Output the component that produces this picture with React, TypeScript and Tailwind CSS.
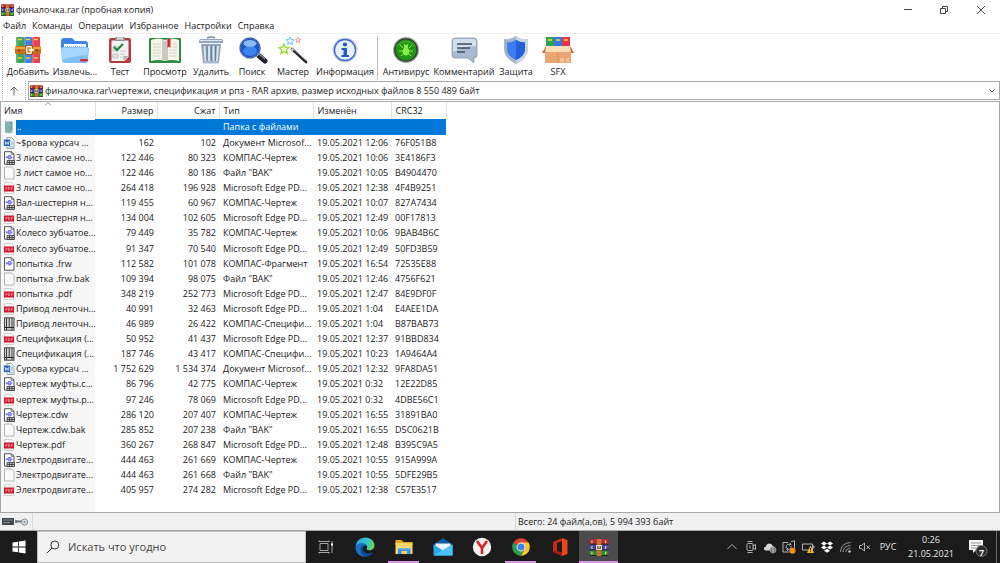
import type { ReactNode } from "react";
import { clsx } from "clsx";

type FileKind = "word" | "cdw" | "frw" | "spw" | "blank" | "pdf";

interface ArchiveFile {
  name: string;
  size: string;
  packed: string;
  kind: FileKind;
  modified: string;
  crc: string;
}

const typeNames: Record<FileKind, string> = {
  word: "Документ Microsof...",
  cdw: "КОМПАС-Чертеж",
  frw: "КОМПАС-Фрагмент",
  spw: "КОМПАС-Специфи...",
  blank: 'Файл "BAK"',
  pdf: "Microsoft Edge PD...",
};

const files: ArchiveFile[] = [
  { name: "~$рова курсач ...", size: "162", packed: "102", kind: "word", modified: "19.05.2021 12:06", crc: "76F051B8" },
  { name: "3 лист самое но...", size: "122 446", packed: "80 323", kind: "cdw", modified: "19.05.2021 10:06", crc: "3E4186F3" },
  { name: "3 лист самое но...", size: "122 446", packed: "80 186", kind: "blank", modified: "19.05.2021 10:05", crc: "B4904470" },
  { name: "3 лист самое но...", size: "264 418", packed: "196 928", kind: "pdf", modified: "19.05.2021 12:38", crc: "4F4B9251" },
  { name: "Вал-шестерня н...", size: "119 455", packed: "60 967", kind: "cdw", modified: "19.05.2021 10:07", crc: "827A7434" },
  { name: "Вал-шестерня н...", size: "134 004", packed: "102 605", kind: "pdf", modified: "19.05.2021 12:49", crc: "00F17813" },
  { name: "Колесо зубчатое...", size: "79 449", packed: "35 782", kind: "cdw", modified: "19.05.2021 10:06", crc: "9BAB4B6C" },
  { name: "Колесо зубчатое...", size: "91 347", packed: "70 540", kind: "pdf", modified: "19.05.2021 12:49", crc: "50FD3B59" },
  { name: "попытка .frw", size: "112 582", packed: "101 078", kind: "frw", modified: "19.05.2021 16:54", crc: "72535E88" },
  { name: "попытка .frw.bak", size: "109 394", packed: "98 075", kind: "blank", modified: "19.05.2021 12:46", crc: "4756F621" },
  { name: "попытка .pdf", size: "348 219", packed: "252 773", kind: "pdf", modified: "19.05.2021 12:47", crc: "84E9DF0F" },
  { name: "Привод ленточн...", size: "40 991", packed: "32 463", kind: "pdf", modified: "19.05.2021 1:04", crc: "E4AEE1DA" },
  { name: "Привод ленточн...", size: "46 989", packed: "26 422", kind: "spw", modified: "19.05.2021 1:04", crc: "B87BAB73" },
  { name: "Спецификация (...", size: "50 952", packed: "41 437", kind: "pdf", modified: "19.05.2021 12:37", crc: "91BBD834" },
  { name: "Спецификация (...", size: "187 746", packed: "43 417", kind: "spw", modified: "19.05.2021 10:23", crc: "1A9464A4" },
  { name: "Сурова курсач ...", size: "1 752 629", packed: "1 534 374", kind: "word", modified: "19.05.2021 12:32", crc: "9FA8DA51" },
  { name: "чертеж муфты.c...", size: "86 796", packed: "42 775", kind: "cdw", modified: "19.05.2021 0:32", crc: "12E22D85" },
  { name: "чертеж муфты.p...", size: "97 246", packed: "78 069", kind: "pdf", modified: "19.05.2021 0:32", crc: "4DBE56C1" },
  { name: "Чертеж.cdw", size: "286 120", packed: "207 407", kind: "cdw", modified: "19.05.2021 16:55", crc: "31891BA0" },
  { name: "Чертеж.cdw.bak", size: "285 852", packed: "207 238", kind: "blank", modified: "19.05.2021 16:55", crc: "D5C0621B" },
  { name: "Чертеж.pdf", size: "360 267", packed: "268 847", kind: "pdf", modified: "19.05.2021 12:48", crc: "B395C9A5" },
  { name: "Электродвигате...", size: "444 463", packed: "261 669", kind: "cdw", modified: "19.05.2021 10:55", crc: "915A999A" },
  { name: "Электродвигате...", size: "444 463", packed: "261 668", kind: "blank", modified: "19.05.2021 10:55", crc: "5DFE29B5" },
  { name: "Электродвигате...", size: "405 957", packed: "274 282", kind: "pdf", modified: "19.05.2021 12:38", crc: "C57E3517" },
];

const menus = ["Файл", "Команды", "Операции", "Избранное", "Настройки", "Справка"];

/* Toolbar icons, 32x28 */

function Icon({ children }: { children: ReactNode }) {
  return (
    <svg viewBox="0 0 32 28" className="h-7 w-8" aria-hidden="true">
      {children}
    </svg>
  );
}

function AddIcon() {
  return (
    <Icon>
      <rect x="4" y="1" width="8" height="26" rx="1" fill="#3aa655" />
      <rect x="12" y="1" width="8" height="26" rx="1" fill="#3f7fe0" />
      <rect x="20" y="1" width="8" height="26" rx="1" fill="#ec3d55" />
      <path d="M5 1v26M13 1v26M21 1v26" stroke="#ffffff" strokeOpacity=".35" />
      <path d="M6 3.500h4M14 3.500h4M22 3.500h4M6 22h4M14 22h4M22 22h4" stroke="#f4d43c" strokeWidth="1.500" />
      <rect x="3" y="10" width="26" height="8" rx="1" fill="#c86f17" />
      <rect x="3" y="11" width="26" height="2" fill="#efa23e" />
      <rect x="13" y="9" width="8" height="10" rx="2" fill="#8a4a12" />
      <rect x="14.500" y="10.500" width="5" height="7" rx="1.500" fill="#d98a35" stroke="#f3f1ea" strokeWidth="1.600" />
      <path d="M17 14h5" stroke="#fff" strokeWidth="1.500" />
      <circle cx="7" cy="14.500" r="1" fill="#6d3606" />
      <circle cx="25" cy="14.500" r="1" fill="#6d3606" />
    </Icon>
  );
}

function ExtractIcon() {
  return (
    <Icon>
      <path d="M2 5q0-3 3-3h7q2 0 3 2l1 1h10q3 0 3 3v4H2z" fill="#3d83ea" />
      <path d="M5 8h22v12H5z" fill="#fff" />
      <path d="M6 10.500h20" stroke="#9dc3ea" strokeDasharray="1 1" />
      <path d="M2 13q0-2 2-2h24q2 0 2 2l-1 11q0 3-3 3H6q-3 0-3-3z" fill="#7fc1fb" />
      <path d="M3 12h26l-.500 7q-12 0-25 5z" fill="#a8d7fd" />
      <rect x="21" y="23" width="8" height="2.500" rx="1" fill="#dd2e35" />
    </Icon>
  );
}

function TestIcon() {
  return (
    <Icon>
      <rect x="5" y="2" width="22" height="25" rx="2" fill="#b83a3e" />
      <path d="M7.500 4.500h17v16.500l-4 4h-13z" fill="#f3f4f4" />
      <path d="M24.500 20l-5 5v-5z" fill="#aeb2b4" />
      <rect x="11" y="1" width="10" height="4" rx="1" fill="#8e9396" />
      <rect x="13" y="1.500" width="6" height="2" fill="#e5e5e5" />
      <path d="M9 10h5v5H9zM9 18h5v4H9z" fill="#dfe4e4" stroke="#b1b8b8" strokeWidth=".7" />
      <path d="M10 11l3 3 6-6" fill="none" stroke="#24803b" strokeWidth="2" />
      <path d="M16 15h6M16 18h5M16 21h3" stroke="#c9cccc" />
    </Icon>
  );
}

function ViewIcon() {
  return (
    <Icon>
      <rect x="0" y="2" width="32" height="25" rx="1" fill="#2f8a43" />
      <path d="M2 4q7-3 14 0v21q-7-2-14 0z" fill="#f8f6ec" />
      <path d="M30 4q-7-3-14 0v21q7-2 14 0z" fill="#f8f6ec" />
      <path d="M13 4q2 0 3 1 1-1 3-1v20q-2 0-3 1-1-1-3-1z" fill="#c8c9c1" />
      <path d="M4 8h8M4 11h8M4 14h8M4 17h8M4 20h7M20 14h8M20 17h8M20 20h7M24 8h4M24 11h4" stroke="#c4c6bd" strokeWidth=".8" />
      <path d="M18.500 3h3v9l-1.500-1.500L18.500 12z" fill="#d8252d" />
    </Icon>
  );
}

function DeleteIcon() {
  return (
    <Icon>
      <path d="M12 2q4-2 8 0" fill="none" stroke="#7b8ba0" strokeWidth="1.500" />
      <path d="M4 5q0-2 2-2h20q2 0 2 2v2H4z" fill="#93a6bd" />
      <path d="M5 4.500h22" stroke="#dfe8f1" />
      <path d="M6 8h20l-2 19H8z" fill="#8ea3bb" />
      <path d="M9.500 10l1 15M14 10v15M18.500 10v15M23 10l-1 15" stroke="#dde7f0" strokeWidth="1.800" />
      <path d="M12 10v15M16.300 10v15M20.500 10v15" stroke="#5e7690" strokeWidth=".8" />
      <rect x="8" y="25" width="16" height="2.500" rx="1" fill="#a9b9cb" />
    </Icon>
  );
}

function FindIcon() {
  return (
    <Icon>
      <path d="M22 19l7 6" stroke="#20242b" strokeWidth="5" strokeLinecap="round" />
      <path d="M23 18l6 5" stroke="#848b96" strokeWidth="1.200" />
      <circle cx="14" cy="12" r="11" fill="#b9cbe2" />
      <circle cx="14" cy="12" r="9.500" fill="#1f52c6" />
      <ellipse cx="14" cy="15" rx="7" ry="5" fill="#3c84ee" />
      <ellipse cx="14" cy="7.500" rx="6.500" ry="3.500" fill="#89b8f7" />
      <circle cx="14" cy="12" r="10" fill="none" stroke="#315da6" strokeWidth="1" />
    </Icon>
  );
}

function WizardIcon() {
  return (
    <Icon>
      <path d="M15 13l14 13" stroke="#25282b" strokeWidth="2.600" strokeLinecap="round" />
      <path d="M15 12l14 12.500" stroke="#9a9da0" strokeWidth=".8" />
      <path d="M14.500 12.500l2 2" stroke="#b9bcc0" strokeWidth="2.600" />
      <path d="M7 8l1.500 3.200 3.600.3-2.700 2.400.9 3.500-3.200-1.800-3.100 2 .7-3.600-2.700-2.400 3.500-.5z" fill="#f4fbcf" stroke="#9ad83a" strokeWidth="1.300" />
      <path d="M13 1l1.200 2.500 2.800.2-2.100 2 .7 2.800-2.500-1.500-2.400 1.500.5-2.800-2-2 2.700-.3z" fill="#effcff" stroke="#64c9e9" strokeWidth="1" />
      <path d="M21 1.500l.7 1.700 2 .2-1.500 1.300.5 2-1.700-1-1.700 1 .4-2-1.400-1.300 2-.2z" fill="#ffe8e8" stroke="#ed8b91" strokeWidth=".8" />
    </Icon>
  );
}

function InfoIcon() {
  return (
    <Icon>
      <circle cx="16" cy="14" r="12.500" fill="#c8d0da" />
      <circle cx="16" cy="14" r="10.500" fill="#e9f0fa" stroke="#3e69d4" strokeWidth="1.300" />
      <circle cx="16" cy="8.500" r="2.100" fill="#2657cd" />
      <path d="M12.500 12H18v7h2v2h-7.500v-2h2v-5h-2z" fill="#2657cd" />
    </Icon>
  );
}

function VirusIcon() {
  return (
    <Icon>
      <circle cx="16" cy="14" r="13" fill="#9ea4a0" />
      <circle cx="16" cy="14" r="11.800" fill="#2f3b2f" />
      <circle cx="16" cy="14" r="10.500" fill="#229414" />
      <path d="M7 10q9-9 18 0" fill="none" stroke="#3ba528" strokeWidth="2" />
      <path d="M10 9l3 3M22 9l-3 3M9 15h5M23 15h-5M11 20l3-3M21 20l-3-3M14 8l1 2M18 8l-1 2" stroke="#86f14e" strokeWidth="1" />
      <circle cx="16" cy="11" r="2.200" fill="#86f14e" />
      <ellipse cx="16" cy="15.500" rx="3.300" ry="4" fill="#86f14e" />
    </Icon>
  );
}

function CommentIcon() {
  return (
    <Icon>
      <path d="M7 2h19q3 0 3 3v14q0 3-3 3v5l-6-5H7q-3 0-3-3V5q0-3 3-3z" fill="#a9bad0" stroke="#8597af" strokeWidth=".8" />
      <path d="M7 3h18q3 0 3 3v4q-12 0-23 6V6q0-3 2-3z" fill="#d4dfec" />
      <path d="M9 8h15M9 12h13M9 16h8" stroke="#3f4b5c" strokeWidth="1.300" />
    </Icon>
  );
}

function ProtectIcon() {
  return (
    <Icon>
      <path d="M16 0q5 4 12 3v10q0 9-12 15Q4 22 4 13V3q7 1 12-3z" fill="#a2b4c8" />
      <path d="M16 0q5 4 12 3v10q0 9-12 15z" fill="#c9d4df" />
      <path d="M16 4q4 2.500 9 2.500V13q0 7-9 11-9-4-9-11V6.500Q12 6.500 16 4z" fill="#3f7df0" />
      <path d="M16 4q4 2.500 9 2.500V13q0 7-9 11z" fill="#2460db" />
    </Icon>
  );
}

function SfxIcon() {
  return (
    <Icon>
      <rect x="4" y="1" width="8" height="12" fill="#2fa24a" />
      <rect x="12" y="1" width="8" height="12" fill="#347ae0" />
      <rect x="20" y="1" width="8" height="12" fill="#e93150" />
      <path d="M6 4h4M14 4h4M22 4h4" stroke="#f7d84a" strokeWidth="1.500" />
      <path d="M3 15h26v12H3z" fill="#eba473" />
      <path d="M4 10h24l2 6H2z" fill="#fbe0b5" />
      <path d="M4 10L3 17H0zM28 10l1 7h3z" fill="#b96a48" />
      <path d="M16 17v10" stroke="#d98c5e" strokeWidth="1" />
      <path d="M18 22h4v4h-4zM24 22h3v4h-3z" fill="#f6c39b" />
    </Icon>
  );
}

interface Tool {
  label: string;
  width: string;
  icon: ReactNode;
}

const archiveTools: Tool[] = [
  { label: "Добавить", width: "w-[46px]", icon: <AddIcon /> },
  { label: "Извлечь...", width: "w-12", icon: <ExtractIcon /> },
  { label: "Тест", width: "w-[42px]", icon: <TestIcon /> },
  { label: "Просмотр", width: "w-12", icon: <ViewIcon /> },
  { label: "Удалить", width: "w-11", icon: <DeleteIcon /> },
  { label: "Поиск", width: "w-[38px]", icon: <FindIcon /> },
  { label: "Мастер", width: "w-11", icon: <WizardIcon /> },
  { label: "Информация", width: "w-15", icon: <InfoIcon /> },
];

const extraTools: Tool[] = [
  { label: "Антивирус", width: "w-13", icon: <VirusIcon /> },
  { label: "Комментарий", width: "w-16", icon: <CommentIcon /> },
  { label: "Защита", width: "w-10", icon: <ProtectIcon /> },
  { label: "SFX", width: "w-11", icon: <SfxIcon /> },
];

function ToolButton({ tool }: { tool: Tool }) {
  return (
    <button type="button" className={clsx("flex flex-col items-center gap-[2px] whitespace-nowrap", tool.width)}>
      {tool.icon}
      <span className="leading-3">{tool.label}</span>
    </button>
  );
}

/* Stack of three strapped books */
function RarLogo({ className }: { className: string }) {
  return (
    <svg viewBox="0 0 20 18" className={className} aria-hidden="true">
      <rect x="0" y="0" width="20" height="6" rx="1" fill="#b3283e" />
      <rect x="0" y="6" width="20" height="6" rx="1" fill="#3b46b8" />
      <rect x="0" y="12" width="20" height="6" rx="1" fill="#2d8a3e" />
      <path d="M0 5.500h20M0 11.500h20M0 17.500h20" stroke="#1d1930" strokeWidth="1" />
      <path d="M2.500 1.500v3M2.500 7.500v3M2.500 13.500v3M17 1.500v3M17 7.500v3M17 13.500v3" stroke="#e8c440" strokeWidth="1.500" />
      <rect x="7.500" y="0" width="5" height="18" fill="#c8742a" />
      <rect x="6.500" y="6" width="7" height="6" rx="1" fill="#5b3620" />
      <rect x="7.500" y="7" width="5" height="4" fill="none" stroke="#efe3c4" strokeWidth="1.200" />
      <path d="M10 7v3" stroke="#fff" />
    </svg>
  );
}

function FileIcon({ kind }: { kind: FileKind | "folder" }) {
  return (
    <svg viewBox="0 0 12 14" className="h-3.5 w-3 shrink-0" aria-hidden="true">
      {kind === "folder" && (
        <>
          <path d="M2 1.500h7.500v11H2z" fill="#6fa09d" />
          <path d="M2 1.500l5.500 1v11L2 12z" fill="#84b3af" />
          <path d="M9.500 9.500v3h-2" fill="#b9cfcd" />
        </>
      )}
      {kind === "word" && (
        <>
          <path d="M4 1.500h4.500l2.500 2.500v8.500H4z" fill="#fff" stroke="#7e8fa8" strokeWidth=".8" />
          <path d="M8 6h2M8 8h2M5.500 10.800h4.500" stroke="#4f8bd2" strokeWidth=".8" />
          <rect x=".8" y="3.500" width="6.400" height="6.500" fill="#2467bd" />
          <path d="M1.900 5l.9 3.500L4 6l1.200 2.500.9-3.500" fill="none" stroke="#fff" strokeWidth=".7" />
        </>
      )}
      {kind === "blank" && (
        <path d="M1.500 1h7l2.500 2.500v9.500H1.500z" fill="#fafafa" stroke="#a3a3a3" strokeWidth=".8" />
      )}
      {kind === "pdf" && (
        <>
          <path d="M1.500 1.500h7l2.200 2v9H1.500z" fill="#f7f7f7" stroke="#c6c6c6" strokeWidth=".8" />
          <rect x="1" y="4.500" width="10" height="6" rx=".5" fill="#d3152a" />
          <path d="M3 9V6.200h.8q1 .800 0 1.500H3M5.500 6.200v2.500q2 0 1.400-1.900-.3-.6-1.400-.6M8.500 9V6.200H10M8.500 7.600h1.200" fill="none" stroke="#fbd5d9" strokeWidth=".5" />
        </>
      )}
      {(kind === "cdw" || kind === "frw") && (
        <>
          <path d="M1.500.7h6.700l2.800 2.500v10H1.500z" fill="#fff" stroke="#3f3f46" strokeWidth=".9" />
          <path d="M8.200.7v2.500H11" fill="none" stroke="#3f3f46" strokeWidth=".7" />
          <rect x="5.200" y="4.500" width="2.800" height="3.500" rx=".6" fill="#a9a8f7" stroke="#5b57ea" strokeWidth=".8" />
          <path d="M2.700 6.200h2.500M8 6.200h1.500M3.800 5.200v2.200" stroke="#5b57ea" strokeWidth=".8" />
        </>
      )}
      {kind === "cdw" && <path d="M4 9.500h7.500v4H4zM4 11.500h7.500M6.500 9.500v4M9 9.500v4" fill="#c9c9cc" stroke="#333338" strokeWidth=".8" />}
      {kind === "spw" && (
        <>
          <rect x="1.500" y=".8" width="9.500" height="12.400" fill="#d2d2d2" stroke="#444" strokeWidth="1" />
          <path d="M3.500 1v12M6.200 1v9.500M9 1v12" stroke="#404040" strokeWidth="1" />
          <path d="M1.500 10.500H11" stroke="#262626" strokeWidth="1" />
        </>
      )}
    </svg>
  );
}

const th = "h-[17px] border-r border-[#e5e5e5] bg-white font-normal";

function FileTable() {
  return (
    <table className="h-[396px] w-[445px] table-fixed border-collapse whitespace-nowrap">
      <colgroup>
        <col className="w-[94px]" />
        <col className="w-[62px]" />
        <col className="w-[62px]" />
        <col className="w-[94px]" />
        <col className="w-[78px]" />
        <col className="w-[55px]" />
      </colgroup>
      <thead>
        <tr>
          <th className={clsx(th, "relative pt-px pl-[3px] text-left")}>
            Имя
            <svg viewBox="0 0 8 4" className="absolute top-0 left-[43px] h-1 w-2" aria-hidden="true">
              <path d="M1 3.500l3-3 3 3" fill="none" stroke="#777" strokeWidth=".8" />
            </svg>
          </th>
          <th className={clsx(th, "pt-px pr-[3px] text-right")}>Размер</th>
          <th className={clsx(th, "pt-px pr-[3px] text-right")}>Сжат</th>
          <th className={clsx(th, "pt-px pl-1 text-left")}>Тип</th>
          <th className={clsx(th, "pt-px pl-1 text-left")}>Изменён</th>
          <th className={clsx(th, "pt-px pl-1 text-left")}>CRC32</th>
        </tr>
      </thead>
      <tbody>
        <tr className="text-white">
          <td className="p-0">
            <div className="flex h-[15px] items-center pl-[2px]">
              <FileIcon kind="folder" />
              <span className="ml-px h-full flex-1 bg-[#0078d7] pl-px">..</span>
            </div>
          </td>
          <td className="bg-[#0078d7] p-0" />
          <td className="bg-[#0078d7] p-0" />
          <td className="bg-[#0078d7] p-0 pl-1">Папка с файлами</td>
          <td className="bg-[#0078d7] p-0" />
          <td className="bg-[#0078d7] p-0" />
        </tr>
        {files.map((file) => (
          <tr key={file.crc}>
            <td className="p-0">
              <div className="flex items-center gap-px pl-[2px]">
                <FileIcon kind={file.kind} />
                <span>{file.name}</span>
              </div>
            </td>
            <td className="p-0 pr-[3px] text-right">{file.size}</td>
            <td className="p-0 pr-[3px] text-right">{file.packed}</td>
            <td className="p-0 pl-1">{typeNames[file.kind]}</td>
            <td className="p-0 pl-1">{file.modified}</td>
            <td className="p-0 pl-1">{file.crc}</td>
          </tr>
        ))}
      </tbody>
    </table>
  );
}

/* Taskbar */

const svgBase = "h-5 w-5";

function TaskViewIcon() {
  return (
    <svg viewBox="0 0 20 20" className={svgBase} aria-hidden="true">
      <path d="M4 6.500h8v7H4zM3 3.500v1.500M13 3.500v1.500M3 4.500h10M3 15.500h10M3 15v1.500M13 15v1.500M16 4v12" fill="none" stroke="#b5b5b5" strokeWidth=".9" />
      <path d="M15 6.500h2v2h-2z" fill="#fff" />
    </svg>
  );
}

function EdgeIcon() {
  return (
    <svg viewBox="0 0 20 20" className={svgBase} aria-hidden="true">
      <defs>
        <linearGradient id="edge-top" x1="0" x2="1" y1=".3" y2=".5">
          <stop offset="0" stopColor="#2aa6e6" />
          <stop offset=".55" stopColor="#35c1d1" />
          <stop offset="1" stopColor="#63dc52" />
        </linearGradient>
      </defs>
      <path d="M.7 9.500C1 4 5 .5 10.300.5c5.700 0 9.200 4 9.200 8 0 3-2.300 4.800-5 4.800-2.300 0-3.300-1-2.800-1.900 1.300-2-.4-4.700-3.700-4.700-3.500 0-6 1.800-7.300 2.800z" fill="url(#edge-top)" />
      <path d="M.5 10C1 7.500 4 6 7 6c2.500 0 4.500 1 5 3-1-1-5-.5-5 3 0 4 5 6.500 10.500 3.700C16 18 13.500 19.600 10 19.600 4 19.600.3 15 .5 10z" fill="#1672c9" />
      <path d="M7.500 8.500C4 11 5 18 10.500 19.500c4 0 6.500-2 7.500-4-5 3-11.500 0-10.500-7z" fill="#114a96" />
    </svg>
  );
}

function ExplorerIcon() {
  return (
    <svg viewBox="0 0 20 20" className={svgBase} aria-hidden="true">
      <path d="M1.500 3h6l2 2h9v3h-17z" fill="#e9a520" />
      <path d="M1.500 6h17v11h-17z" fill="#fbd667" />
      <path d="M4 17v-6h12.500v6H13v-3H7.500v3z" fill="#3b93dd" />
      <path d="M4 11h12.500v1.500H4z" fill="#6cb5ee" />
    </svg>
  );
}

function MailIcon() {
  return (
    <svg viewBox="0 0 20 20" className={svgBase} aria-hidden="true">
      <path d="M.5 7.500L10 1l9.500 6.500V12H.5z" fill="#0d5ca8" />
      <path d="M2.500 6.500h15V14h-15z" fill="#eef3f8" />
      <path d="M.5 7.500L10 13.500l9.500-6V18.500H.5z" fill="#27a8ea" />
      <path d="M.5 18.500L19.500 7.500v11z" fill="#4cc3f5" />
    </svg>
  );
}

function YandexIcon() {
  return (
    <svg viewBox="0 0 20 20" className={svgBase} aria-hidden="true">
      <circle cx="10" cy="10" r="9.200" fill="#f2f2f2" />
      <path d="M5 4l5 7 5-7M10 10.500V17" fill="none" stroke="#dc1f26" strokeWidth="2.500" />
    </svg>
  );
}

function ChromeIcon() {
  return (
    <svg viewBox="0 0 20 20" className={svgBase} aria-hidden="true">
      <path d="M10 10L2.400 5.600A8.800 8.800 0 0 1 17.600 5.600z" fill="#e0402f" />
      <path d="M2.400 5.600A8.800 8.800 0 0 0 10 18.800l4-6.500L10 10z" fill="#2c9e4b" />
      <path d="M10 5.600h7.600A8.800 8.800 0 0 1 10 18.800l4-7z" fill="#fbc52d" />
      <circle cx="10" cy="10" r="4.400" fill="#f4f4f4" />
      <circle cx="10" cy="10" r="3.500" fill="#3f82ee" />
    </svg>
  );
}

function OfficeIcon() {
  return (
    <svg viewBox="0 0 20 20" className={svgBase} aria-hidden="true">
      <path d="M3 5l9-4v3L7 6v8l-4 1z" fill="#c52b14" />
      <path d="M12 1l5.500 2v14L12 19z" fill="#e8471f" />
      <path d="M3 15l4-1 5 1.500V19z" fill="#a51d10" />
    </svg>
  );
}

const apps = [
  { name: "Представление задач", icon: <TaskViewIcon /> },
  { name: "Microsoft Edge", icon: <EdgeIcon /> },
  { name: "Проводник", icon: <ExplorerIcon />, open: true },
  { name: "Почта", icon: <MailIcon /> },
  { name: "Яндекс", icon: <YandexIcon /> },
  { name: "Chrome", icon: <ChromeIcon />, open: true },
  { name: "Office", icon: <OfficeIcon /> },
  { name: "WinRAR", icon: <RarLogo className="h-[17px] w-5" />, active: true },
];

function TrayIcon({ label, children }: { label: string; children: ReactNode }) {
  return (
    <button type="button" aria-label={label} className="flex w-[19px] items-center justify-center">
      <svg viewBox="0 0 14 14" className="h-3.5 w-3.5" fill="none" stroke="#c4c4c4" strokeWidth=".9" aria-hidden="true">
        {children}
      </svg>
    </button>
  );
}

function Tray() {
  return (
    <div className="ml-auto flex items-stretch">
      <TrayIcon label="Скрытые значки">
        <path d="M2.500 9L7 4.500 11.500 9" />
      </TrayIcon>
      <TrayIcon label="Камера">
        <rect x="3" y="3.500" width="6" height="7" rx="1" />
        <path d="M9 6l2.500-1.500v5L9 8M3.500 1.500h5M3.500 12.500h5M6 5.500v3" />
      </TrayIcon>
      <TrayIcon label="OneDrive">
        <path d="M2.500 10.500q-2-.5-1.500-2.500.5-1.500 2-1.500.5-3 3.500-3 2.500 0 3.200 2.500 2 .3 2 2.500 0 2-2 2z" fill="#d8d8d8" stroke="none" />
        <circle cx="10" cy="10" r="3" fill="#777" stroke="#aaa" strokeWidth=".7" />
        <path d="M10 8v1M10 9.500v2" stroke="#fff" strokeWidth=".8" />
      </TrayIcon>
      <TrayIcon label="Обновление">
        <path d="M1 2.500h5M9 1.500l3.500-.7v8M1 2.500v9.500h6.500M4.300 8.500q-1-4 2.700-4.300h2M9 6q1 3.500-3.500 3.500M7.500 2.700L9 4.200 7.500 5.700M6 8L4.800 9.500 6 11" />
        <circle cx="10.500" cy="10.800" r="3" fill="#f78c0c" stroke="none" />
      </TrayIcon>
      <TrayIcon label="Батарея">
        <path d="M1.500 4h10v6h-10zM11.500 6H13v2h-1.500" />
        <path d="M9.500 5.500L13 13H6z" fill="#f6bd16" stroke="none" />
        <path d="M9.500 8v2.500M9.500 11.200v1" stroke="#2b2100" />
      </TrayIcon>
      <TrayIcon label="Dropbox">
        <path d="M4 1.500l3 2-3 2-3-2zM10 1.500l3 2-3 2-3-2zM4 5.500l3 2-3 2-3-2zM10 5.500l3 2-3 2-3-2zM7 8.700l3 2-3 2-3-2z" fill="#fff" stroke="none" />
      </TrayIcon>
      <TrayIcon label="Сеть">
        <path d="M1.500 12Q2 3 11.500 2.500M4 12Q4.500 6 11.500 5.500M6.500 12Q7 8.500 11.500 8" stroke="#a0a0a0" />
        <circle cx="10.500" cy="11.500" r="1.200" fill="#ccc" stroke="none" />
      </TrayIcon>
      <TrayIcon label="Звук">
        <path d="M1.500 5.500h2L6.500 3v8L3.500 8.500h-2zM8.500 5.500L12 9M12 5.500L8.500 9" />
      </TrayIcon>
      <button type="button" className="w-7 text-center">РУС</button>
      <button type="button" className="flex w-[58px] flex-col items-center justify-center leading-[14px]">
        <span>0:26</span>
        <span>21.05.2021</span>
      </button>
      <button type="button" aria-label="Уведомления" className="relative flex w-9 items-center justify-center">
        <svg viewBox="0 0 20 20" className="h-5 w-5" aria-hidden="true">
          <path d="M1 3h14v10H8l-3 3v-3H1z" fill="#f5f5f5" />
          <path d="M3 6h10M3 8.500h10M3 11h5" stroke="#9b9b9b" />
          <circle cx="13.500" cy="14" r="5.500" fill="#2b2b2b" stroke="#777" />
        </svg>
        <span className="absolute right-2 bottom-1 w-[13px] text-center font-bold leading-3">7</span>
      </button>
      <div className="w-1 border-l border-[#6b6b6b]" />
    </div>
  );
}

function Taskbar() {
  return (
    <footer className="flex h-8 shrink-0 items-stretch bg-[#1b1b1b] text-[#e6e6e6]">
      <button type="button" aria-label="Пуск" className="flex w-[37px] items-center justify-center">
        <svg viewBox="0 0 14 14" className="h-3.5 w-3.5" fill="#fff" aria-hidden="true">
          <path d="M.5 2.500L6 1.700v4.900H.5zM6.800 1.600L13.500.5v6.100H6.800zM.5 7.400H6v4.900l-5.500-.8zM6.800 7.400h6.700v6.100l-6.700-1z" />
        </svg>
      </button>
      <label className="flex w-[269px] items-center gap-2 border border-[#bdbdbd] bg-[#f2f2f2] pl-2">
        <svg viewBox="0 0 14 14" className="h-3.5 w-3.5" fill="none" stroke="#333" aria-hidden="true">
          <circle cx="8.800" cy="5" r="4" />
          <path d="M6 8L.8 13.200" />
        </svg>
        <input
          type="search"
          aria-label="Поиск в системе"
          placeholder="Искать что угодно"
          className="min-w-0 flex-1 bg-transparent text-[11px] text-[#444] outline-none placeholder:text-[#444]"
        />
      </label>
      <nav className="flex">
        {apps.map((app) => (
          <button
            key={app.name}
            type="button"
            aria-label={app.name}
            className={clsx("relative flex w-[39px] items-center justify-center", app.active && "bg-[#4b4b4b]")}
          >
            {app.icon}
            {(app.open || app.active) && (
              <span className={clsx("absolute bottom-0 h-0.5 bg-[#dd94e6]", app.active ? "inset-x-0" : "inset-x-1")} />
            )}
          </button>
        ))}
      </nav>
      <Tray />
    </footer>
  );
}

export default function App() {
  return (
    <div className="flex h-screen flex-col bg-white font-['Open_Sans','Noto_Sans',sans-serif] text-[9px] leading-[14px] text-[#222]">
      <header className="flex h-[19px] shrink-0 items-center gap-[2px] pl-px">
        <RarLogo className="h-3 w-[13px]" />
        <h1>финалочка.rar (пробная копия)</h1>
        <div className="ml-auto flex">
          <button type="button" aria-label="Свернуть" className="flex w-9 justify-center">
            <svg viewBox="0 0 10 10" className="h-2.5 w-2.5" stroke="#444" aria-hidden="true">
              <path d="M1 4.500h8" />
            </svg>
          </button>
          <button type="button" aria-label="Развернуть" className="flex w-9 justify-center">
            <svg viewBox="0 0 10 10" className="h-2.5 w-2.5" fill="none" stroke="#444" aria-hidden="true">
              <path d="M1.500 3.500h5v5h-5zM3.500 3V1.500h5v5H7" />
            </svg>
          </button>
          <button type="button" aria-label="Закрыть" className="flex w-[38px] justify-center">
            <svg viewBox="0 0 10 10" className="h-2.5 w-2.5" stroke="#444" strokeWidth=".9" aria-hidden="true">
              <path d="M1 1l8 8M9 1L1 9" />
            </svg>
          </button>
        </div>
      </header>

      <nav className="flex h-[15px] shrink-0 items-center gap-[6px] border-b border-[#f0f0f0] pl-[3px]">
        {menus.map((menu) => (
          <button key={menu} type="button">
            {menu}
          </button>
        ))}
      </nav>

      <div className="flex h-[47px] shrink-0 items-start pt-[2px] pl-[2px]">
        <div className="mr-[2px] h-11 border-l border-dotted border-[#b5b5b5]" />
        {archiveTools.map((tool) => (
          <ToolButton key={tool.label} tool={tool} />
        ))}
        <div className="mx-[2px] h-11 border-l border-[#bdbdbd]" />
        {extraTools.map((tool) => (
          <ToolButton key={tool.label} tool={tool} />
        ))}
      </div>

      <div className="flex h-[19px] shrink-0 pl-[2px]">
        <button type="button" aria-label="Вверх" className="flex w-6 items-center justify-center border-x border-dotted border-[#b5b5b5]">
          <svg viewBox="0 0 10 10" className="h-2.5 w-2.5" fill="none" stroke="#666" aria-hidden="true">
            <path d="M5 9.500V1M1.500 4.500L5 1l3.500 3.500" />
          </svg>
        </button>
        <div className="relative ml-[2px] flex flex-1 items-center gap-[2px] border border-[#a8a8a8] pl-px">
          <RarLogo className="h-3 w-[13px]" />
          <select aria-label="Путь в архиве" className="h-full flex-1 appearance-none bg-transparent outline-none">
            <option>финалочка.rar\чертежи, спецификация и рпз - RAR архив, размер исходных файлов 8 550 489 байт</option>
          </select>
          <svg viewBox="0 0 8 6" className="pointer-events-none absolute right-[3px] h-1.5 w-2" fill="none" stroke="#666" aria-hidden="true">
            <path d="M1.500 1.500L4 4l2.500-2.500" />
          </svg>
        </div>
      </div>

      <main className="mt-px min-h-0 flex-1 overflow-hidden border border-[#a8a8a8] bg-[linear-gradient(to_right,#f7f7f7_94px,#fff_94px)]">
        <FileTable />
      </main>

      <div className="flex h-[18px] shrink-0 items-center border-b border-[#a8a8a8] bg-[#f0f0f0]">
        <div className="flex h-full w-[33px] items-center gap-[2px] border-r border-[#d9d9d9] pl-[2px]">
          <svg viewBox="0 0 26 8" className="h-2 w-[26px]" aria-hidden="true">
            <rect x="0" y="0" width="12" height="7" fill="#3e474b" />
            <path d="M1 2h10M1 4.500h7" stroke="#7d888c" />
            <path d="M14 3.500h7M14 2v3" stroke="#6f777a" strokeWidth="1.800" />
            <circle cx="22.500" cy="4" r="3" fill="#e5e8ea" stroke="#7b868b" />
            <circle cx="22.500" cy="4" r="1" fill="#7b868b" />
          </svg>
        </div>
        <div className="h-full flex-1 border-r border-[#d9d9d9]" />
        <div className="flex-1 pl-[2px]">Всего: 24 файл(а,ов), 5 994 393 байт</div>
      </div>

      <Taskbar />
    </div>
  );
}
